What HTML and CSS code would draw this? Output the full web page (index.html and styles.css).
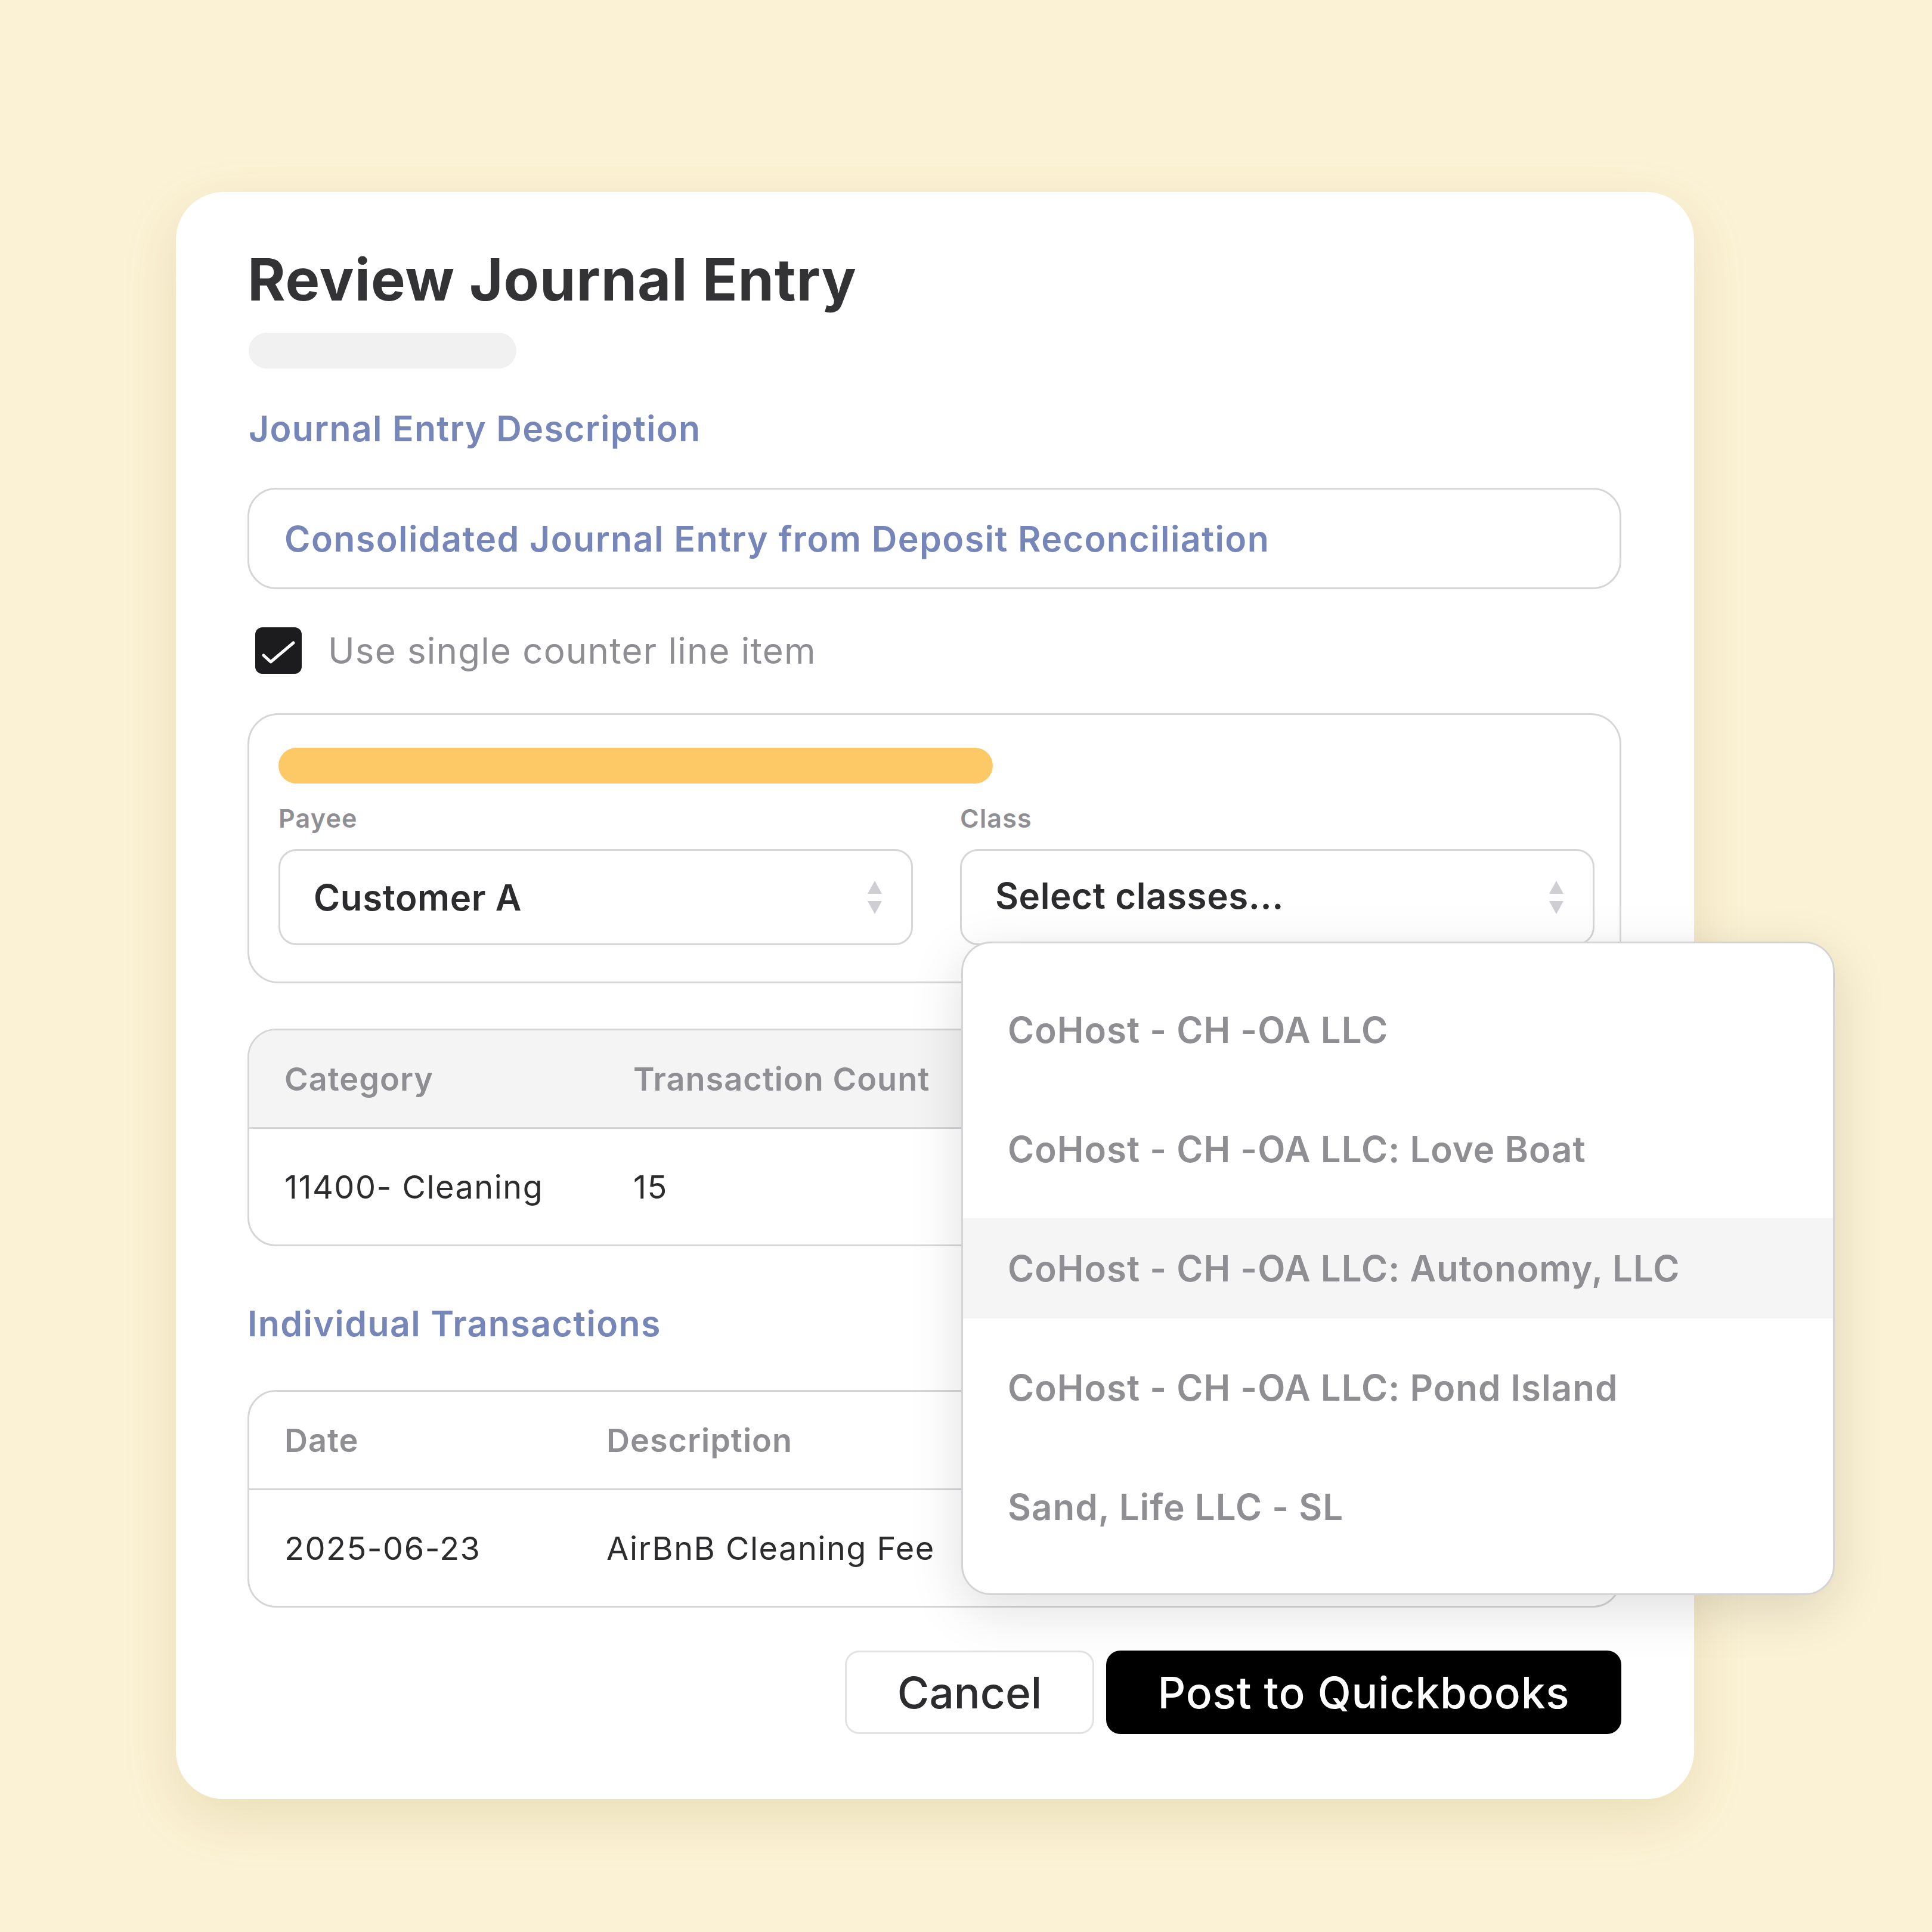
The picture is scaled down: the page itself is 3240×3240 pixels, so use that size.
FILE: index.html
```html
<!DOCTYPE html>
<html lang="en">
<head>
<meta charset="utf-8">
<title>Review Journal Entry</title>
<link rel="stylesheet" href="styles.css">
</head>
<body>
<div class="page">
  <div class="card">
    <h1 class="title">Review Journal Entry</h1>
    <div class="pill"></div>
    <div class="section-label first">Journal Entry Description</div>
    <div class="desc-input">Consolidated Journal Entry from Deposit Reconciliation</div>
    <div class="check-row">
      <span class="checkbox">
        <svg viewBox="0 0 78 78" width="78" height="78"><path d="M14 47 L26 58 L64 26" fill="none" stroke="#fff" stroke-width="5" stroke-linecap="round" stroke-linejoin="round"/></svg>
      </span>
      <span class="check-label">Use single counter line item</span>
    </div>
    <div class="line-box">
      <div class="bar"></div>
      <div class="fields">
        <div class="field">
          <div class="field-label">Payee</div>
          <div class="select">
            <span>Customer A</span>
            <svg class="arrows" viewBox="0 0 26 56" width="26" height="56"><path d="M13 0 L25 22 L1 22 Z M1 34 L25 34 L13 56 Z" fill="#cfcfd3"/></svg>
          </div>
        </div>
        <div class="field class-field">
          <div class="field-label">Class</div>
          <div class="select">
            <span>Select classes...</span>
            <svg class="arrows" viewBox="0 0 26 56" width="26" height="56"><path d="M13 0 L25 22 L1 22 Z M1 34 L25 34 L13 56 Z" fill="#cfcfd3"/></svg>
          </div>
          <div class="dropdown">
            <div class="option">CoHost - CH -OA LLC</div>
            <div class="option">CoHost - CH -OA LLC: Love Boat</div>
            <div class="option active">CoHost - CH -OA LLC: Autonomy, LLC</div>
            <div class="option">CoHost - CH -OA LLC: Pond Island</div>
            <div class="option">Sand, Life LLC - SL</div>
          </div>
        </div>
      </div>
    </div>
    <div class="table t1">
      <div class="row head gray">
        <div class="cell c1">Category</div>
        <div class="cell">Transaction Count</div>
      </div>
      <div class="row">
        <div class="cell c1">11400- Cleaning</div>
        <div class="cell">15</div>
      </div>
    </div>
    <div class="section-label second">Individual Transactions</div>
    <div class="table t2">
      <div class="row head">
        <div class="cell c1">Date</div>
        <div class="cell">Description</div>
      </div>
      <div class="row">
        <div class="cell c1">2025-06-23</div>
        <div class="cell">AirBnB Cleaning Fee</div>
      </div>
    </div>
    <div class="actions">
      <div class="btn cancel">Cancel</div>
      <div class="btn post">Post to Quickbooks</div>
    </div>
  </div>
</div>
</body>
</html>
```
FILE: styles.css
```css
* { box-sizing: border-box; }
html, body { margin: 0; padding: 0; }
body {
  background: #fbf2d5;
  font-family: "Inter", "Noto Sans", sans-serif;
  width: 3240px;
  height: 3240px;
  overflow: hidden;
}
.page {
  padding: 322px 0 0 295px;
}
.card {
  width: 2546px;
  height: 2695px;
  background: #ffffff;
  border-radius: 80px;
  box-shadow: 0 30px 90px rgba(150, 120, 40, 0.16);
  padding: 98px 122px 0 120px;
  display: flex;
  flex-direction: column;
}
.title {
  margin: 0;
  font-size: 97px;
  line-height: 1;
  font-weight: 700;
  color: #333336;
  letter-spacing: 1px;
}
.pill {
  margin-top: 41px;
  width: 449px;
  height: 60px;
  border-radius: 30px;
  background: #f1f1f1;
  margin-left: 2px;
}
.section-label {
  font-size: 59px;
  line-height: 1;
  font-weight: 600;
  color: #7786b8;
  margin-left: 2px;
  letter-spacing: 1.3px;
}
.section-label.first { margin-top: 71px; }
.section-label.second { margin-top: 100px; margin-left: 0; letter-spacing: 1.4px; }
.desc-input {
  margin-top: 70px;
  height: 170px;
  border: 3px solid #d6d6d8;
  border-radius: 48px;
  display: flex;
  align-items: center;
  padding-left: 59px;
  font-size: 59px;
  font-weight: 600;
  color: #7786b8;
  letter-spacing: 1.45px;
}
.check-row {
  margin-top: 64px;
  height: 78px;
  display: flex;
  align-items: center;
  padding-left: 13px;
}
.checkbox {
  width: 78px;
  height: 78px;
  border-radius: 12px;
  background: #1c1c1e;
  display: flex;
}
.check-label {
  margin-left: 44px;
  font-size: 60px;
  color: #8e8e93;
  letter-spacing: 1.2px;
}
.line-box {
  margin-top: 66px;
  border: 3px solid #d6d6d8;
  border-radius: 52px;
  padding: 55px 42px 61px 49px;
}
.bar {
  width: 1198px;
  height: 60px;
  border-radius: 30px;
  background: #fdc966;
}
.fields {
  display: grid;
  grid-template-columns: 1fr 1fr;
  column-gap: 79px;
  margin-top: 37px;
}
.field { position: relative; }
.field-label {
  font-size: 43px;
  line-height: 1;
  font-weight: 600;
  color: #8e8e93;
  margin-bottom: 30px;
  letter-spacing: 1.2px;
}
.select {
  height: 161px;
  border: 3px solid #d6d6d8;
  border-radius: 30px;
  display: flex;
  align-items: center;
  justify-content: space-between;
  padding: 0 48px 0 56px;
  font-size: 60px;
  font-weight: 600;
  color: #2c2c2e;
  letter-spacing: 0.6px;
}
.class-field .select span { margin-top: -6px; }
.arrows { flex: none; }
.dropdown {
  position: absolute;
  left: 2px;
  top: calc(100% - 6px);
  width: 1465px;
  background: #ffffff;
  border: 3px solid #d4d4d6;
  border-radius: 50px;
  box-shadow: 0 24px 90px rgba(0, 0, 0, 0.13);
  padding: 61px 0;
  display: flex;
  flex-direction: column;
  gap: 32px;
  z-index: 5;
}
.option {
  height: 168px;
  display: flex;
  align-items: center;
  padding-left: 75px;
  font-size: 60px;
  font-weight: 600;
  color: #8e8e93;
  letter-spacing: 1px;
}
.option.active { background: #f5f5f5; }
.table {
  border: 3px solid #d6d6d8;
  border-radius: 48px;
  overflow: hidden;
}
.t1 { margin-top: 76px; }
.t2 { margin-top: 82px; }
.row {
  display: flex;
  align-items: center;
  height: 194px;
  font-size: 54px;
  color: #2c2c2e;
  letter-spacing: 1.5px;
}
.row.head {
  height: 165px;
  border-bottom: 3px solid #d6d6d8;
  font-weight: 600;
  color: #8e8e93;
  letter-spacing: 1px;
}
.row.head.gray { background: #f4f4f5; }
.cell { padding-left: 59px; }
.t1 .c1 { width: 644px; padding-left: 59px; }
.t1 .cell:not(.c1) { padding-left: 0; }
.t2 .c1 { width: 599px; }
.t2 .cell:not(.c1) { padding-left: 0; }
.actions {
  margin-top: 72px;
  display: flex;
  justify-content: flex-end;
  gap: 20px;
}
.btn {
  height: 140px;
  border-radius: 24px;
  display: flex;
  align-items: center;
  justify-content: center;
  font-size: 73px;
  font-weight: 500;
}
.cancel {
  width: 418px;
  border: 3px solid #e2e2e4;
  color: #2c2c2e;
}
.post {
  width: 864px;
  background: #000000;
  color: #ffffff;
  letter-spacing: 0.8px;
}
```
